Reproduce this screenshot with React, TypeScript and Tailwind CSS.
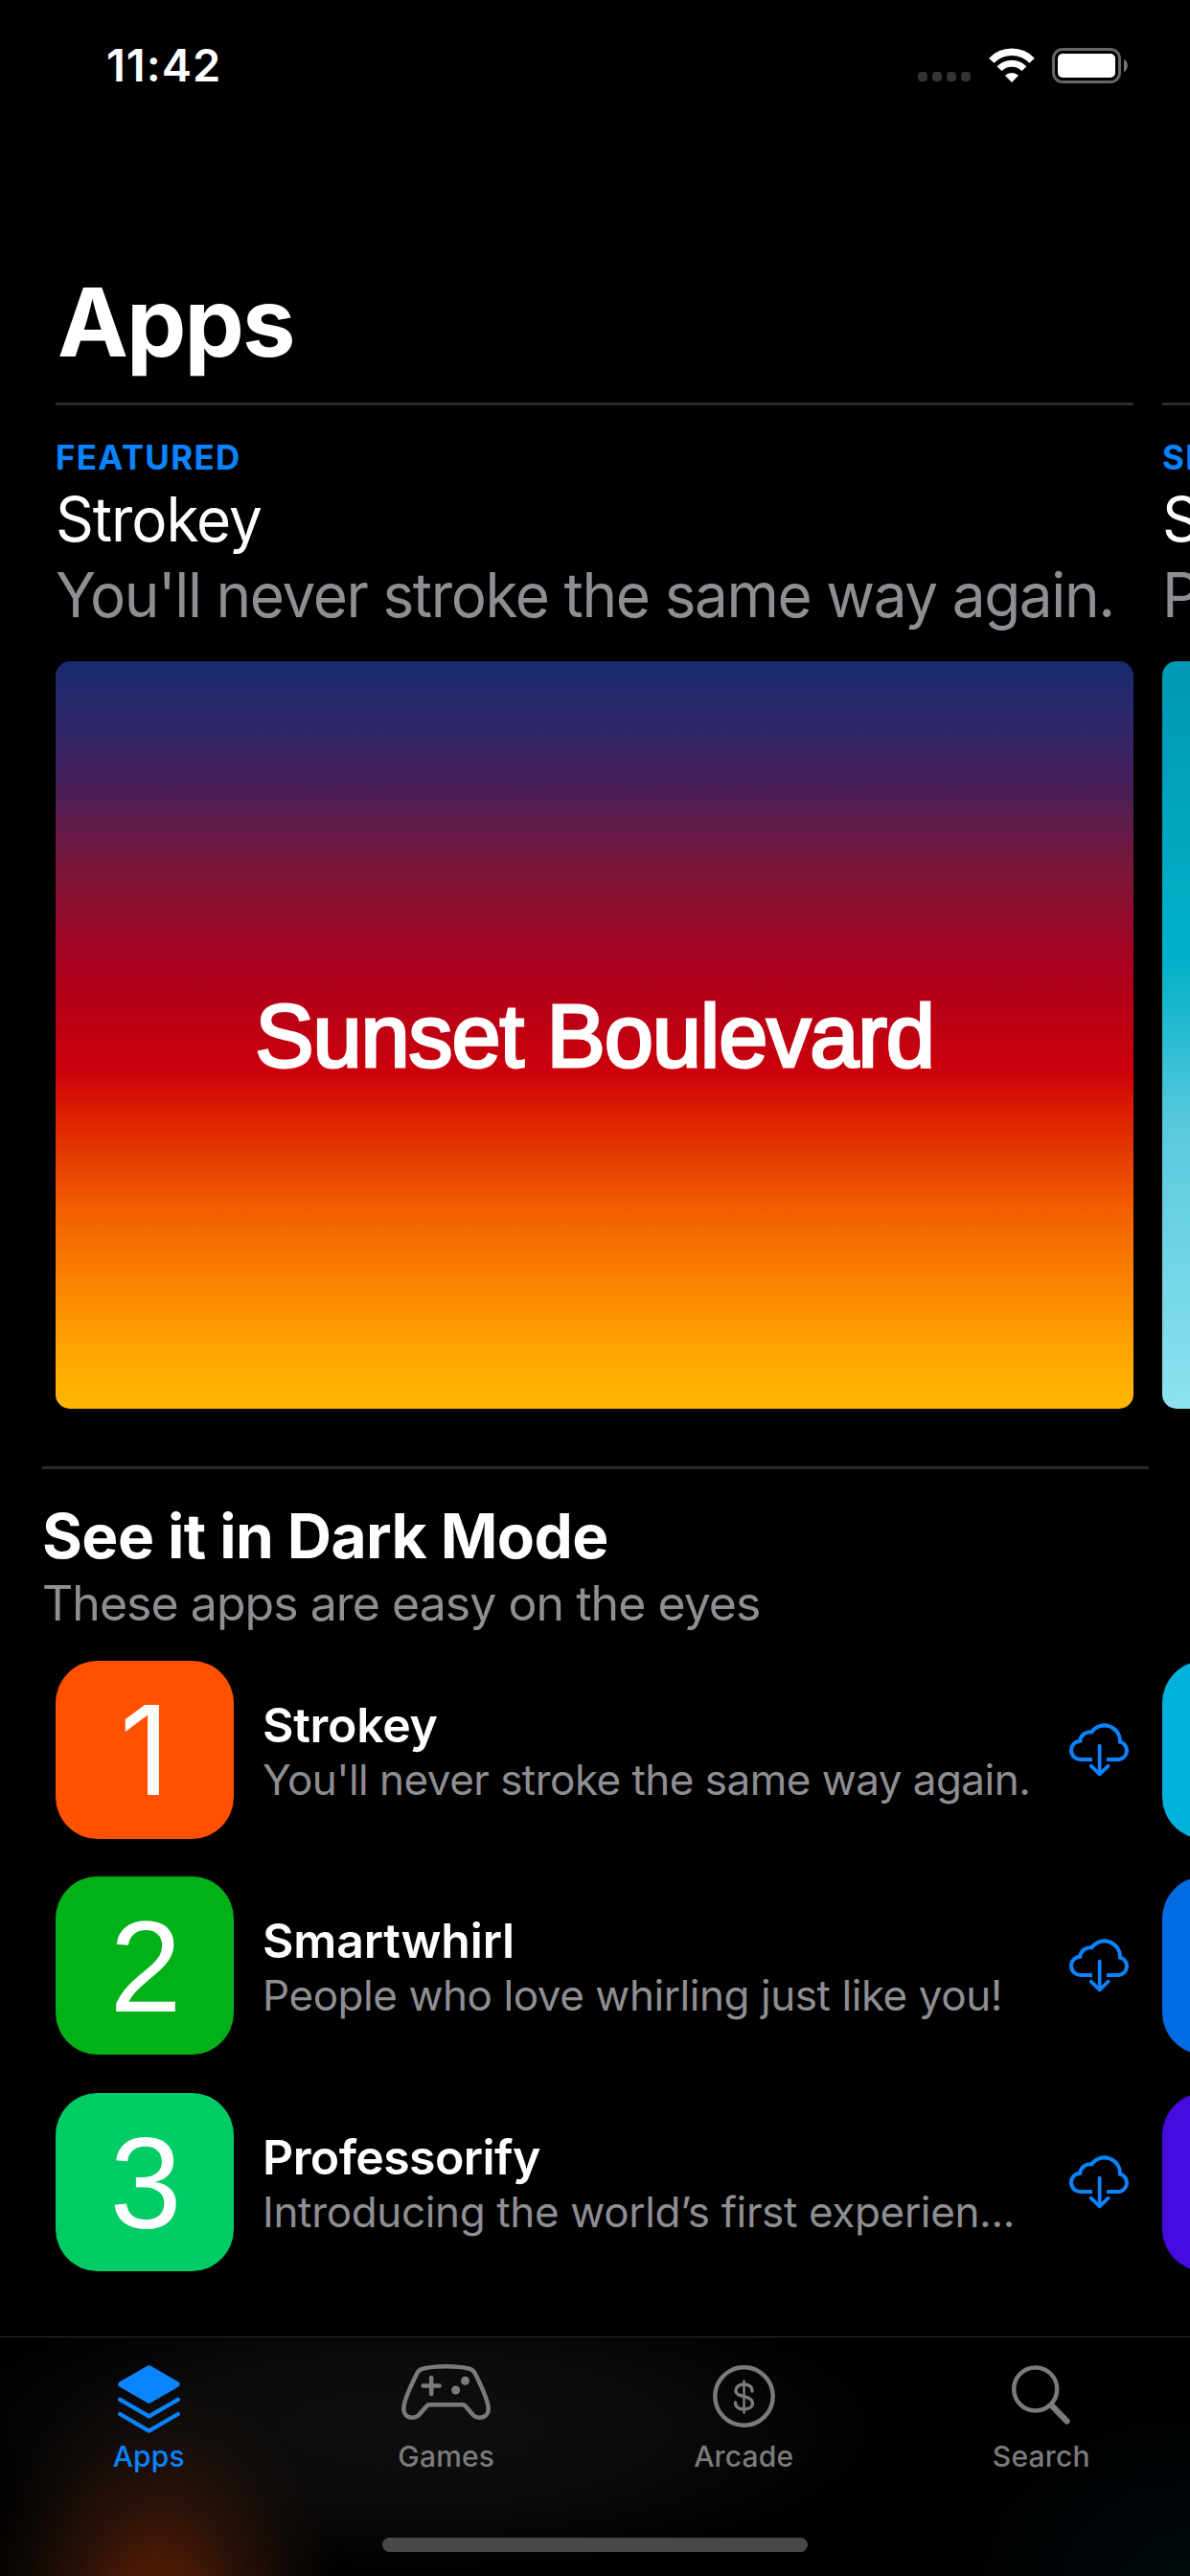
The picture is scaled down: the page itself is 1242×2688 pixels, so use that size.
import type { ReactNode } from "react";

type FeatureCard = {
  label: string;
  title: string;
  subtitle: string;
  art: string;
  caption?: string;
};

type AppEntry = {
  rank: string;
  rankClass: string;
  tile: string;
  name: string;
  nameClass: string;
  tagline: string;
  taglineClass: string;
  nextTile: string;
};

const features: FeatureCard[] = [
  {
    label: "FEATURED",
    title: "Strokey",
    subtitle: "You'll never stroke the same way again.",
    art: "bg-[linear-gradient(to_bottom,#182a6e_0%,#29286a_6.6%,#461f5a_16.5%,#771639_27%,#a00725_37.5%,#b2001a_44%,#cb000b_54.7%,#de2500_61.6%,#f05b00_72.6%,#fd8700_84%,#ffa400_92%,#ffb700_100%)]",
    caption: "Sunset Boulevard",
  },
  {
    label: "SPOTLIGHT",
    title: "Smartwhirl",
    subtitle: "People who love whirling just like you!",
    art: "bg-[linear-gradient(to_bottom,#0097b5_0%,#00b1c9_40%,#57c9dc_62%,#8de2f0_100%)]",
  },
];

const apps: AppEntry[] = [
  {
    rank: "1",
    rankClass: "font-[Inter,sans-serif] text-[129px]",
    tile: "bg-[#ff5100]",
    name: "Strokey",
    nameClass: "tracking-[-0.006em]",
    tagline: "You'll never stroke the same way again.",
    taglineClass: "tracking-[-0.012em]",
    nextTile: "bg-[#00b1de]",
  },
  {
    rank: "2",
    rankClass: "font-['Liberation_Sans',sans-serif] text-[135px] pl-[2px] pt-[2px]",
    tile: "bg-[#00b118]",
    name: "Smartwhirl",
    nameClass: "tracking-[-0.004em]",
    tagline: "People who love whirling just like you!",
    taglineClass: "tracking-[-0.01em]",
    nextTile: "bg-[#006be2]",
  },
  {
    rank: "3",
    rankClass: "font-['Liberation_Sans',sans-serif] text-[135px] pl-[2px] pt-[2px]",
    tile: "bg-[#00cc66]",
    name: "Professorify",
    nameClass: "tracking-[-0.012em]",
    tagline: "Introducing the world’s first experien...",
    taglineClass: "tracking-[-0.008em]",
    nextTile: "bg-[#450bdf]",
  },
];

function StatusBar() {
  return (
    <header className="flex h-[136px] items-center justify-between pl-[111px] pr-[65px]">
      <span className="text-[47px] font-semibold leading-[56px] tracking-[0.021em]">11:42</span>
      <div className="flex items-center">
        <div className="mr-[19px] flex gap-[5px] pt-6">
          {[0, 1, 2, 3].map((i) => (
            <span key={i} className="size-[10px] rounded-[4px] bg-[#343434]" />
          ))}
        </div>
        <svg className="mr-[18px]" width="48" height="36" viewBox="0 0 48 36" fill="none">
          <path d="M2.8 13.2 A29.5 29.5 0 0 1 45.2 13.2" stroke="#fff" strokeWidth="7.4" />
          <path d="M11 21.7 A18 18 0 0 1 37 21.7" stroke="#fff" strokeWidth="7" />
          <path d="M24 36 L17 28.8 A10 10 0 0 1 31 28.8 Z" fill="#fff" />
        </svg>
        <svg width="79" height="37" viewBox="0 0 79 37" fill="none">
          <rect x="1.5" y="1.5" width="69" height="34" rx="9.5" stroke="#666" strokeWidth="3" />
          <rect x="6" y="6" width="60" height="25" rx="5" fill="#fff" />
          <path d="M75 12 C80 14 80 23 75 25 Z" fill="#777" />
        </svg>
      </div>
    </header>
  );
}

function Feature({ card }: { card: FeatureCard }) {
  return (
    <article className="w-[1125px] shrink-0 whitespace-nowrap border-t-[3px] border-[#2b2b2c] pt-8">
      <p className="text-[35px] font-bold leading-[44px] tracking-[0.0365em] text-[#0a84ff]">{card.label}</p>
      <h2 className="mt-[3px] origin-left scale-x-[0.97] text-[64px] leading-[79px] tracking-[-0.017em]">{card.title}</h2>
      <p className="origin-left scale-x-[0.97] text-[64px] leading-[79px] tracking-[-0.0227em] text-[#8e8e93]">
        {card.subtitle}
      </p>
      <div className={`mt-[30px] flex h-[780px] items-center justify-center rounded-[15px] ${card.art}`}>
        {card.caption && (
          <span className="pt-[2px] font-['Liberation_Sans',Arial,sans-serif] text-[92px] leading-none tracking-[-0.012em] [-webkit-text-stroke:3px_#fff]">
            {card.caption}
          </span>
        )}
      </div>
    </article>
  );
}

function CloudDownload() {
  return (
    <svg className="mb-[2px] mr-1 shrink-0" width="63" height="57" viewBox="78 81 189 171" fill="none" stroke="#0a84ff">
      <path d="M150 198 H114 A29 29 0 0 1 112 140 A31 31 0 0 1 148 112 A49 49 0 0 1 237 143 A28 28 0 0 1 233 198 H195" strokeWidth="12" />
      <path d="M173 155 V243 M146 218 L173 244 L200 218" strokeWidth="11" strokeLinecap="round" strokeLinejoin="round" />
    </svg>
  );
}

function AppRow({ app }: { app: AppEntry }) {
  return (
    <li className="flex gap-[30px]">
      <div className="flex h-[186px] w-[1125px] shrink-0 items-center">
        <div className={`flex size-[186px] shrink-0 items-center justify-center rounded-[44px] leading-none ${app.tile} ${app.rankClass}`}>
          {app.rank}
        </div>
        <div className="ml-[30px] flex-1 whitespace-nowrap pt-[4px]">
          <h3 className={`text-[50px] font-semibold leading-[58px] ${app.nameClass}`}>{app.name}</h3>
          <p className={`text-[44px] leading-[56px] text-[#8e8e93] ${app.taglineClass}`}>{app.tagline}</p>
        </div>
        <CloudDownload />
      </div>
      <div className={`size-[186px] shrink-0 rounded-[44px] ${app.nextTile}`} />
    </li>
  );
}

function Tab({ label, color, children }: { label: string; color: string; children: ReactNode }) {
  return (
    <div className={`flex flex-1 flex-col items-center ${color}`}>
      <div className="flex h-[71px] items-start">{children}</div>
      <span className="mt-[6px] text-[30px] font-medium leading-[37px] tracking-[0.006em]">{label}</span>
    </div>
  );
}

function TabBar() {
  return (
    <nav className="mt-auto h-[250px] shrink-0 border-t border-[#2a2a2a] bg-[radial-gradient(ellipse_190px_240px_at_165px_280px,#501b05_0%,#4a1a06_20%,#34150acc_45%,#1d100a77_75%,transparent_100%),radial-gradient(ellipse_260px_210px_at_1242px_260px,#00090c_0%,transparent_100%),radial-gradient(ellipse_500px_150px_at_430px_95px,#0e0e0e_0%,#0b0b0b_50%,transparent_100%)] pt-[29px]">
      <div className="flex">
        <Tab label="Apps" color="text-[#0a84ff]">
          <svg width="65" height="71" viewBox="0 0 65 71" fill="none" stroke="currentColor" strokeLinecap="round" strokeLinejoin="round">
            <path d="M32.5 3 L62 20 L32.5 37 L3 20 Z" fill="currentColor" strokeWidth="5.5" />
            <path d="M2.2 35.8 L32.5 53.4 L62.8 35.8 M2.2 51 L32.5 68.6 L62.8 51" strokeWidth="4.3" />
          </svg>
        </Tab>
        <Tab label="Games" color="text-[#7b7b7b]">
          <svg className="-mt-px" width="93" height="58" viewBox="0 0 93 58" fill="none" stroke="currentColor" strokeWidth="4.5" strokeLinecap="round">
            <path d="M46.5 2.3 C36 2.3 28 3.3 22 4.8 C18.5 5.7 17 7.8 15.5 11 C11 20 2.3 38 2.3 46.5 C2.3 52 6 55.7 11.5 55.7 C15 55.7 17.5 54.3 19.5 51.5 L26.5 43.5 Q27.5 42.3 29 42.3 H64 Q65.5 42.3 66.5 43.5 L73.5 51.5 C75.5 54.3 78 55.7 81.5 55.7 C87 55.7 90.7 52 90.7 46.5 C90.7 38 82 20 77.5 11 C76 7.8 74.5 5.7 71 4.8 C65 3.3 57 2.3 46.5 2.3 Z" />
            <path d="M31.2 14 V31 M22.7 22.5 H39.7" />
            <circle cx="66.5" cy="17.3" r="4.5" fill="currentColor" stroke="none" />
            <circle cx="56.6" cy="27" r="4.5" fill="currentColor" stroke="none" />
          </svg>
        </Tab>
        <Tab label="Arcade" color="text-[#7b7b7b]">
          <svg width="65" height="65" viewBox="0 0 65 65" fill="none" stroke="currentColor" strokeLinecap="round">
            <circle cx="32.5" cy="32.5" r="30.2" strokeWidth="4.4" />
            <path d="M41 27 C41 22.7 37.5 20 32.5 20 C27.5 20 24 22.7 24 26.3 C24 30.3 27 31.4 32.5 32.6 C38.5 33.9 41.4 35.9 41.4 39.7 C41.4 43.4 38 46 32.5 46 C27 46 23.5 43.3 23.5 39" strokeWidth="3.4" />
            <path d="M32.5 16.5 V49.5" strokeWidth="2.6" />
          </svg>
        </Tab>
        <Tab label="Search" color="text-[#7b7b7b]">
          <svg width="62" height="63" viewBox="0 0 62 63" fill="none" stroke="currentColor" strokeLinecap="round">
            <circle cx="24.7" cy="24.9" r="22.5" strokeWidth="4.5" />
            <path d="M41.5 42 L57.5 58.5" strokeWidth="6.2" />
          </svg>
        </Tab>
      </div>
      <div className="mx-auto mt-[66px] h-[15px] w-[444px] rounded-full bg-[#484848]" />
    </nav>
  );
}

export default function App() {
  return (
    <div className="flex h-[2688px] w-[1242px] flex-col overflow-hidden bg-black font-[Inter,sans-serif] text-white">
      <StatusBar />
      <h1 className="mt-[150px] pl-[60px] text-[99px] font-bold leading-[100px] tracking-[-0.019em]">Apps</h1>
      <section className="mt-[34px] flex gap-[30px] overflow-hidden pl-[58px]">
        {features.map((card) => (
          <Feature key={card.title} card={card} />
        ))}
      </section>
      <section className="mt-[60px]">
        <div className="ml-11 mr-[43px] border-t-[3px] border-[#2b2b2c] pt-[31px]">
          <h2 className="text-[64px] font-bold leading-[77px] tracking-[-0.009em]">See it in Dark Mode</h2>
          <p className="mt-[2px] text-[50px] leading-[60px] tracking-[-0.0194em] text-[#8e8e93]">
            These apps are easy on the eyes
          </p>
        </div>
        <ul className="mt-[30px] grid grid-rows-[225px_226px_186px] overflow-hidden pl-[58px]">
          {apps.map((app) => (
            <AppRow key={app.name} app={app} />
          ))}
        </ul>
      </section>
      <TabBar />
    </div>
  );
}
